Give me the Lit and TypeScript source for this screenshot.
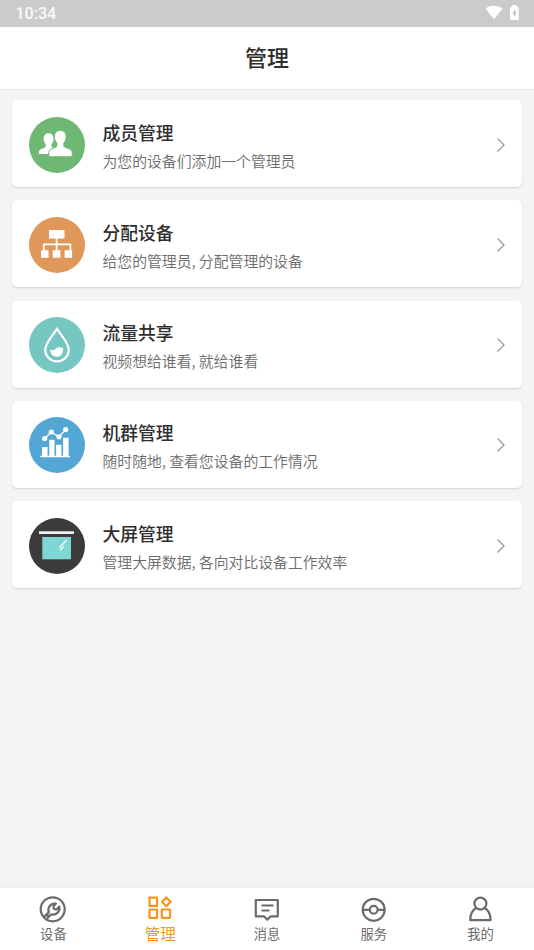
import { LitElement, html, css, svg } from "lit";
import { customElement } from "lit/decorators.js";
import { classMap } from "lit/directives/class-map.js";

const members = svg`
  <circle cx="28" cy="28" r="28" fill="#6fb873"/>
  <path fill="#fff" d="M19.6 16.2c3 0 4.900 2 4.900 5.200 0 2.800-.9 4.500-2 5.700v2.300c.3.700 1 1 2 1.400-2.200 1-4.200 2.200-4.900 4.300V37H9.800v-2.500c.4-2 2.800-2.600 5-3.500 1-.4 1.700-.8 1.900-1.600v-2.300c-1.200-1.200-2-3-2-5.700 0-3.200 1.900-5.200 4.900-5.200z"/>
  <path fill="#fff" stroke="#6fb873" stroke-width=".9" d="M31.300 13.500c3.600 0 5.800 2.300 5.800 6.100 0 3-1 5-2.300 6.400v3c.4 1.300 2 1.600 3.700 2.300 2.500 1 4.500 1.900 4.700 4v4.400H19.900v-4.400c.2-2.100 2-3 4.400-4 1.700-.7 3.200-1 3.600-2.300v-3c-1.400-1.400-2.400-3.400-2.400-6.400 0-3.800 2.200-6.100 5.800-6.100z"/>`;

const assign = svg`
  <circle cx="28" cy="28" r="28" fill="#e0985a"/>
  <path fill="#fff" d="M20 13h15.500v8.500H20zM12 33.200h7.500v7.500H12zM23.700 33.200h7.700v7.500h-7.700zM35.600 33.200h7.500v7.500h-7.500z"/>
  <path fill="none" stroke="#fff" stroke-width="1.800" d="M27.600 21v13M14.800 34v-6.700h26.600V34"/>`;

const traffic = svg`
  <circle cx="28" cy="28" r="28" fill="#76c7c2"/>
  <path fill="none" stroke="#fff" stroke-width="2.200" stroke-linejoin="round" d="M28 11.500C25 17.500 16.200 25.500 16.200 33a11.800 11.300 0 0 0 23.600 0C39.800 25.500 31 17.500 28 11.500z"/>
  <path fill="#fff" d="M21.200 32.500c2 1.200 3.600.8 5-.5 1.800-1.700 4.600-2.200 7.800-1.100.5 5-2 8.800-6.300 8.800-3.800 0-6.400-3-6.500-7.200z"/>`;

const cluster = svg`
  <circle cx="28" cy="28" r="28" fill="#54a6d4"/>
  <path fill="#fff" d="M13 30h5.600v9H13zM20.300 22.700h5.200V39h-5.200zM27.100 27.700h5.300V39h-5.300zM34.100 20.700h5.500V39h-5.500zM11.300 38.700H41v1.500H11.300z"/>
  <path fill="none" stroke="#fff" stroke-width="1.300" d="M15.700 21.500L22.300 15 30 19.800l6.700-7.200"/>
  <g fill="#fff"><circle cx="15.700" cy="21.500" r="2.600"/><circle cx="22.300" cy="15" r="2.600"/><circle cx="30" cy="19.800" r="2.600"/><circle cx="36.700" cy="12.600" r="2.600"/></g>`;

const bigScreen = svg`
  <circle cx="28" cy="28" r="28" fill="#3b3b3b"/>
  <path fill="#f1eeee" d="M10 13.300h35v2.800H10z"/>
  <path fill="#7fd6d5" d="M13.300 19H42v22.300H13.300z"/>
  <path fill="none" stroke="#e9fbfa" stroke-width="1.600" stroke-linecap="round" d="M37.300 22.500l-6.500 6.800M34.300 29l-2.600 2.800"/>`;

const cards = [
  { art: members, title: "成员管理", note: "为您的设备们添加一个管理员" },
  { art: assign, title: "分配设备", note: "给您的管理员, 分配管理的设备" },
  { art: traffic, title: "流量共享", note: "视频想给谁看, 就给谁看" },
  { art: cluster, title: "机群管理", note: "随时随地, 查看您设备的工作情况" },
  { art: bigScreen, title: "大屏管理", note: "管理大屏数据, 各向对比设备工作效率" },
];

const tabs = [
  {
    label: "设备",
    art: svg`<circle cx="13.700" cy="14.300" r="12"/>
      <path d="M5.400 21.600L9.800 17.300C8.200 12.800 11.200 8.100 16.900 8.600L14.300 11.600 14.900 14 17.500 14.500 20.400 11.600C21.200 16.800 17 20.600 12.200 19.300L7.900 23.800M7.200 19.100l3.300 3.300"/>`,
  },
  {
    label: "管理",
    active: true,
    art: svg`<path d="M3.500 2.700h7.600v8.200H3.500zM3.500 14.500h7.600v8.300H3.500zM15.800 14.500H24v8.300h-8.200zM20.300 2.400l4.300 4.400-4.300 4.400L16 6.800z"/>`,
  },
  {
    label: "消息",
    art: svg`<path d="M2.800 5h22v16.300h-7L14.300 24.600l-3.400-3.300H2.800zM8.500 10.500h12M8.500 15.500h8"/>`,
  },
  {
    label: "服务",
    art: svg`<circle cx="13.700" cy="14.800" r="11"/><circle cx="13.700" cy="14.800" r="3.900"/><path d="M2.700 14.800h7.100M17.600 14.800h7.100"/>`,
  },
  {
    label: "我的",
    art: svg`<circle cx="13.400" cy="8.600" r="6"/><path d="M9.200 13C5.400 15 3.300 19 3.200 25.100h20.400C23.500 19 21.400 15 17.500 13"/>`,
  },
];

@customElement("app-root")
export class AppRoot extends LitElement {
  static styles = css`
    :host {
      display: flex;
      flex-direction: column;
      height: 100vh;
      background: #f3f4f6;
      color: #2e2e2e;
      font-family: "Noto Sans CJK SC", "Noto Sans", sans-serif;
      overflow: hidden;
    }
    * { box-sizing: border-box; }
    svg { display: block; flex: none; }
    .status {
      flex: none;
      height: 27px;
      padding: 1px 15.500px 0 15.500px;
      display: flex;
      align-items: center;
      justify-content: space-between;
      background: #cbcbcb;
      color: #fafafa;
      font: 500 16px/26px Roboto, sans-serif;
    }
    .signals { display: flex; gap: 7px; margin-top: -3px; }
    .header {
      flex: none;
      height: 63px;
      padding-bottom: 5px;
      display: flex;
      align-items: center;
      justify-content: center;
      background: #fff;
      border-bottom: 1px solid #e4e4e5;
      font-size: 22px;
      font-weight: 500;
    }
    .list {
      flex: 1;
      display: flex;
      flex-direction: column;
      gap: 13.250px;
      padding: 10px 12px;
    }
    .card {
      height: 87px;
      flex: none;
      display: flex;
      align-items: center;
      padding: 2px 14px 0 17px;
      background: #fff;
      border-radius: 5px;
      box-shadow: 0 1px 2px rgba(0, 0, 0, 0.14);
    }
    .copy { flex: 1; margin-left: 17.500px; padding-top: 2px; }
    .title { font-size: 17.800px; line-height: 26px; font-weight: 500; }
    .note { margin-top: 4px; font-size: 14.850px; line-height: 24px; color: #6b6b6b; font-weight: 350; }
    .tabs {
      flex: none;
      height: 65px;
      display: grid;
      grid-template-columns: repeat(5, 1fr);
      background: #fff;
      border-top: 3px solid #f0f0f0;
    }
    .tab {
      display: flex;
      flex-direction: column;
      align-items: center;
      padding-top: 7px;
      color: #6b6b6b;
      font-size: 13.300px;
      line-height: 21px;
    }
    .tab svg { fill: none; stroke: currentColor; stroke-width: 2.200; stroke-linejoin: round; }
    .tab.active { color: #f7951d; font-size: 15.500px; line-height: 20px; }
  `;

  render() {
    return html`
      <div class="status">
        <span>10:34</span>
        <div class="signals">
          <svg width="18" height="15" viewBox="0 0 18 15"><path fill="#fff" d="M.5 3.400C5.500-.2 12.500-.2 17.500 3.400L9 14.300z"/></svg>
          <svg width="9" height="15" viewBox="0 0 9 15"><path fill="#fff" d="M2.500 0h4v1.500h1.200L8.700 3v12H0V3l1-1.500h1.500z"/><path fill="#bbb" d="M5.200 4L2.500 8.500H4V12l2.600-4.500H5.200z"/></svg>
        </div>
      </div>
      <div class="header">管理</div>
      <div class="list">
        ${cards.map((c) => html`
          <div class="card">
            <svg width="56" height="56" viewBox="0 0 56 56">${c.art}</svg>
            <div class="copy">
              <div class="title">${c.title}</div>
              <div class="note">${c.note}</div>
            </div>
            <svg width="14" height="16" viewBox="0 0 14 16"><path d="M3.500 1.500L10 8l-6.500 6.500" fill="none" stroke="#999" stroke-width="1.300"/></svg>
          </div>`)}
      </div>
      <div class="tabs">
        ${tabs.map((t) => html`
          <div class=${classMap({ tab: true, active: !!t.active })}>
            <svg width="28" height="28" viewBox="0 0 28 28">${t.art}</svg>
            <span>${t.label}</span>
          </div>`)}
      </div>`;
  }
}
